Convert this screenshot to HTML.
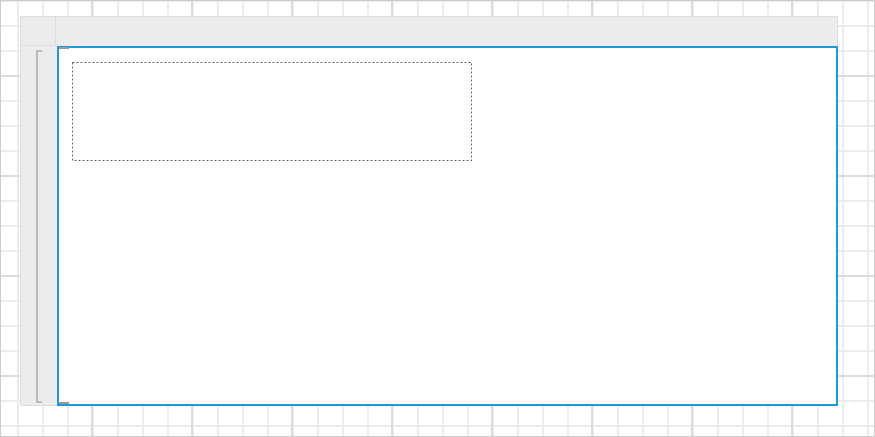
<!DOCTYPE html><html><head><style>
body{margin:0;width:875px;height:437px;overflow:hidden;background:#fff;position:relative;font-family:"Liberation Sans",sans-serif}
.bg{position:absolute;left:0;top:0;width:873px;height:435px;border:1px solid #ccc;
background-image:
linear-gradient(to right,#dcdcdc 2px,transparent 2px),
linear-gradient(to bottom,#dcdcdc 2px,transparent 2px),
linear-gradient(to right,#ececec 2px,transparent 2px),
linear-gradient(to bottom,#ececec 2px,transparent 2px);
background-size:100px 100px,100px 100px,25px 25px,25px 25px;
background-position:90px 0,0 74px,16px 0,0 24px}
.panel{position:absolute;left:20px;top:16px;width:816px;height:388px;background:#ececec;border:1px solid #ddd}
.vd{position:absolute;left:55px;top:16px;width:1px;height:30px;background:#ddd}
.hd{position:absolute;left:20px;top:45px;width:36px;height:1px;background:#ddd}
.blue{position:absolute;left:57px;top:46px;width:777px;height:356px;border:2px solid #1e9ad6;background:#fff}
.br{position:absolute;left:36px;top:50px;width:4px;height:349px;border:2px solid #bbb;border-right:none}
.cm{position:absolute;left:59px;width:10px;height:2px;background:#999}
svg{position:absolute;left:0;top:0}
</style></head><body>
<div class="bg"></div>
<div class="panel"></div>
<div class="vd"></div><div class="hd"></div>
<div class="br"></div>
<div class="blue"></div>
<div class="cm" style="top:47px"></div>
<div class="cm" style="top:402px"></div>
<svg width="875" height="437"><rect x="72.5" y="62.5" width="399" height="98" fill="none" stroke="#666" stroke-width="1" stroke-dasharray="2 2"/></svg>
</body></html>
